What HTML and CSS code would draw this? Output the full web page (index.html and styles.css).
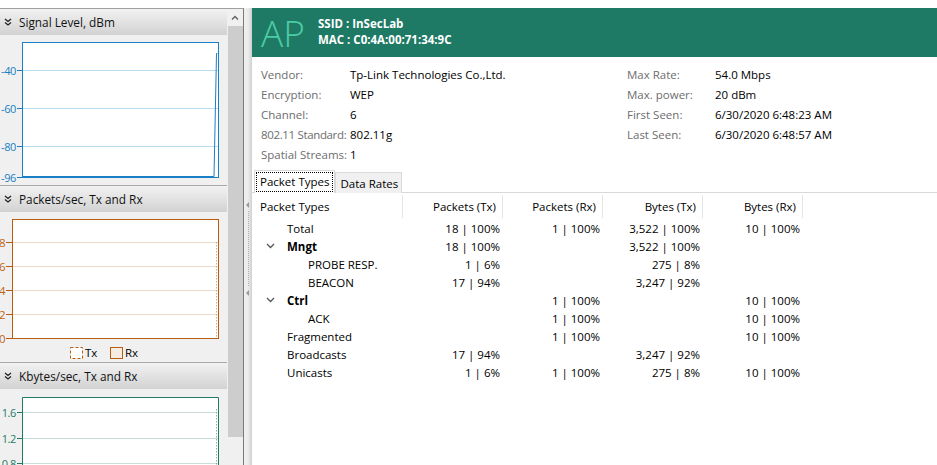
FILE: index.html
```html
<!DOCTYPE html>
<html>
<head>
<meta charset="utf-8">
<link rel="stylesheet" href="styles.css">
</head>
<body>
<div class="topstrip"></div>
<div class="main">
  <aside class="left">
    <div class="left-content">
      <section class="sec">
        <div class="sec-head">
          <svg class="chev" width="8" height="8" viewBox="0 0 8 8"><path d="M1 1 L4 3.5 L7 1 M1 4.5 L4 7 L7 4.5" fill="none" stroke="#222" stroke-width="1.3"/></svg>
          <span>Signal Level, dBm</span>
        </div>
        <div class="chart chart1">
          <svg width="227" height="150" viewBox="0 0 227 150">
            <g stroke="#b9dcef" stroke-width="1">
              <line x1="23" y1="35.5" x2="218" y2="35.5"/>
              <line x1="23" y1="73.5" x2="218" y2="73.5"/>
              <line x1="23" y1="111.5" x2="218" y2="111.5"/>
            </g>
            <rect x="22.5" y="7.5" width="196" height="135" fill="none" stroke="#1a7fc4"/>
            <g stroke="#1a7fc4">
              <line x1="17" y1="35.5" x2="22" y2="35.5"/>
              <line x1="17" y1="73.5" x2="22" y2="73.5"/>
              <line x1="17" y1="111.5" x2="22" y2="111.5"/>
              <line x1="17" y1="142.5" x2="22" y2="142.5"/>
            </g>
            <polyline points="22,141.5 214,141.5 216.5,18.5 217.5,18.5" fill="none" stroke="#1a7fc4"/>
            <g class="lbl blue narrow" text-anchor="end">
              <text x="16" y="39.5">-40</text>
              <text x="16" y="77.5">-60</text>
              <text x="16" y="115.5">-80</text>
              <text x="16" y="146.5">-96</text>
            </g>
          </svg>
        </div>
      </section>
      <section class="sec">
        <div class="sec-head">
          <svg class="chev" width="8" height="8" viewBox="0 0 8 8"><path d="M1 1 L4 3.5 L7 1 M1 4.5 L4 7 L7 4.5" fill="none" stroke="#222" stroke-width="1.3"/></svg>
          <span>Packets/sec, Tx and Rx</span>
        </div>
        <div class="chart chart2">
          <svg width="227" height="150" viewBox="0 0 227 150">
            <g stroke="#ead9c8">
              <line x1="13" y1="30.5" x2="218" y2="30.5"/>
              <line x1="13" y1="54.5" x2="218" y2="54.5"/>
              <line x1="13" y1="78.5" x2="218" y2="78.5"/>
              <line x1="13" y1="102.5" x2="218" y2="102.5"/>
            </g>
            <line x1="216.5" y1="30" x2="216.5" y2="126" stroke="#e3a676" stroke-dasharray="1.5 1.5"/>
            <rect x="12.5" y="7.5" width="206" height="119" fill="none" stroke="#b85c0f"/>
            <g stroke="#b85c0f">
              <line x1="6" y1="30.5" x2="12" y2="30.5"/>
              <line x1="6" y1="54.5" x2="12" y2="54.5"/>
              <line x1="6" y1="78.5" x2="12" y2="78.5"/>
              <line x1="6" y1="102.5" x2="12" y2="102.5"/>
              <line x1="6" y1="126.5" x2="12" y2="126.5"/>
            </g>
            <g class="lbl orange" text-anchor="end">
              <text x="5.5" y="34.5">8</text>
              <text x="5.5" y="58.5">6</text>
              <text x="5.5" y="82.5">4</text>
              <text x="5.5" y="106.5">2</text>
              <text x="5.5" y="130.5">0</text>
            </g>
            <rect x="70.5" y="135.5" width="12" height="11" fill="#fff" stroke="#b85c0f" stroke-dasharray="3 2"/>
            <text class="lbl" x="85" y="145">Tx</text>
            <rect x="110.5" y="135.5" width="12" height="11" fill="#f6ece2" stroke="#b85c0f"/>
            <text class="lbl" x="125" y="145">Rx</text>
          </svg>
        </div>
      </section>
      <section class="sec">
        <div class="sec-head">
          <svg class="chev" width="8" height="8" viewBox="0 0 8 8"><path d="M1 1 L4 3.5 L7 1 M1 4.5 L4 7 L7 4.5" fill="none" stroke="#222" stroke-width="1.3"/></svg>
          <span>Kbytes/sec, Tx and Rx</span>
        </div>
        <div class="chart chart3">
          <svg width="227" height="76" viewBox="0 0 227 76">
            <g stroke="#c9ddd7">
              <line x1="23" y1="23.5" x2="218" y2="23.5"/>
              <line x1="23" y1="49.5" x2="218" y2="49.5"/>
              <line x1="23" y1="74.5" x2="218" y2="74.5"/>
            </g>
            <line x1="216.5" y1="20" x2="216.5" y2="76" stroke="#7fb7a8" stroke-dasharray="1.5 1.5"/>
            <path d="M22.5 80 V8.5 H218.5 V80" fill="none" stroke="#1f7a66"/>
            <g stroke="#1f7a66">
              <line x1="17" y1="23.5" x2="22" y2="23.5"/>
              <line x1="17" y1="49.5" x2="22" y2="49.5"/>
              <line x1="17" y1="74.5" x2="22" y2="74.5"/>
            </g>
            <g class="lbl green narrow" text-anchor="end">
              <text x="16" y="27.5">1.6</text>
              <text x="16" y="53.5">1.2</text>
              <text x="16" y="78.5">0.8</text>
            </g>
          </svg>
        </div>
      </section>
    </div>
    <div class="vscroll">
      <div class="vs-up"><svg width="8" height="5" viewBox="0 0 8 5"><path d="M1 4.5 L4 1.5 L7 4.5" fill="none" stroke="#606060" stroke-width="1.4"/></svg></div>
      <div class="vs-thumb"></div>
    </div>
  </aside>
  <div class="splitter">
    <svg class="grip" width="8" height="100" viewBox="0 0 8 100">
      <path d="M2 4 L5 1 L5 7 Z" fill="#9a9a9a"/>
      <line x1="4.5" y1="10" x2="4.5" y2="86" stroke="#b0b0b0" stroke-dasharray="1 1"/>
      <path d="M2 92 L5 89 L5 95 Z" fill="#9a9a9a"/>
    </svg>
  </div>
  <main class="right">
    <header class="ap-head">
      <div class="ap">AP</div>
      <div class="ap-ids">
        <div>SSID : InSecLab</div>
        <div>MAC : C0:4A:00:71:34:9C</div>
      </div>
    </header>
    <div class="info">
      <dl class="info-col info-left">
        <dt>Vendor:</dt><dd>Tp-Link Technologies Co.,Ltd.</dd>
        <dt>Encryption:</dt><dd>WEP</dd>
        <dt>Channel:</dt><dd>6</dd>
        <dt class="tight">802.11 Standard:</dt><dd>802.11g</dd>
        <dt>Spatial Streams:</dt><dd>1</dd>
      </dl>
      <dl class="info-col info-right">
        <dt>Max Rate:</dt><dd>54.0 Mbps</dd>
        <dt>Max. power:</dt><dd>20 dBm</dd>
        <dt>First Seen:</dt><dd>6/30/2020 6:48:23 AM</dd>
        <dt>Last Seen:</dt><dd>6/30/2020 6:48:57 AM</dd>
      </dl>
    </div>
    <div class="tabs">
      <div class="tab active"><span class="focus">Packet Types</span></div>
      <div class="tab">Data Rates</div>
    </div>
    <div class="grid">
      <div class="hd first">Packet Types</div>
      <div class="hd">Packets (Tx)</div>
      <div class="hd">Packets (Rx)</div>
      <div class="hd">Bytes (Tx)</div>
      <div class="hd">Bytes (Rx)</div>

      <div class="c n l1">Total</div><div class="c">18 | 100%</div><div class="c">1 | 100%</div><div class="c">3,522 | 100%</div><div class="c">10 | 100%</div>
      <div class="c n l1 grp"><svg class="tw" width="9" height="6" viewBox="0 0 9 6"><path d="M1 1 L4.5 4.5 L8 1" fill="none" stroke="#555" stroke-width="1.3"/></svg><b>Mngt</b></div><div class="c">18 | 100%</div><div class="c"></div><div class="c">3,522 | 100%</div><div class="c"></div>
      <div class="c n l2">PROBE RESP.</div><div class="c">1 | 6%</div><div class="c"></div><div class="c">275 | 8%</div><div class="c"></div>
      <div class="c n l2">BEACON</div><div class="c">17 | 94%</div><div class="c"></div><div class="c">3,247 | 92%</div><div class="c"></div>
      <div class="c n l1 grp"><svg class="tw" width="9" height="6" viewBox="0 0 9 6"><path d="M1 1 L4.5 4.5 L8 1" fill="none" stroke="#555" stroke-width="1.3"/></svg><b>Ctrl</b></div><div class="c"></div><div class="c">1 | 100%</div><div class="c"></div><div class="c">10 | 100%</div>
      <div class="c n l2">ACK</div><div class="c"></div><div class="c">1 | 100%</div><div class="c"></div><div class="c">10 | 100%</div>
      <div class="c n l1">Fragmented</div><div class="c"></div><div class="c">1 | 100%</div><div class="c"></div><div class="c">10 | 100%</div>
      <div class="c n l1">Broadcasts</div><div class="c">17 | 94%</div><div class="c"></div><div class="c">3,247 | 92%</div><div class="c"></div>
      <div class="c n l1">Unicasts</div><div class="c">1 | 6%</div><div class="c">1 | 100%</div><div class="c">275 | 8%</div><div class="c">10 | 100%</div>
    </div>
  </main>
</div>
</body>
</html>
```
FILE: styles.css
```css
* { box-sizing: border-box; }
html, body { margin: 0; padding: 0; }
body {
  width: 937px;
  height: 465px;
  overflow: hidden;
  background: #fff;
  font-family: "Open Sans", "Noto Sans", sans-serif;
  font-size: 11.5px;
  color: #000;
}
.topstrip { height: 8px; background: #fff; }
.main { display: flex; height: 457px; }

.left {
  flex: none;
  width: 244px;
  display: flex;
  background: #f0f0f0;
  border-top: 1px solid #a0a0a0;
  border-right: 1px solid #7a7a7a;
  overflow: hidden;
}
.left-content { flex: none; width: 227px; display: flex; flex-direction: column; overflow: hidden; }
.sec { flex: none; border-bottom: 1px solid #a9a9a9; }
.sec-head {
  height: 26px;
  display: flex;
  align-items: center;
  gap: 7px;
  padding-left: 4px;
  background: linear-gradient(#f2f2f2, #d2d2d2);
  font-size: 11.8px;
  color: #111;
}
.chev { flex: none; }
.chart { height: 150px; }
.chart svg { display: block; }
.chart3 { height: 76px; }
.lbl { font-family: "Open Sans", "Noto Sans", sans-serif; font-size: 11.5px; fill: #000; }
.lbl.narrow { font-size: 11px; letter-spacing: -0.4px; }
.lbl.blue { fill: #1a7fc4; }
.lbl.orange { fill: #c0630f; }
.lbl.green { fill: #1f7a66; }

.chart svg { background: linear-gradient(#fff, #fff) no-repeat; }
.chart1 svg { background-position: 23px 8px; background-size: 195px 134px; }
.chart2 svg { background-position: 13px 8px; background-size: 205px 118px; }
.chart3 svg { background-position: 23px 9px; background-size: 195px 70px; }

.vscroll { flex: none; width: 16px; background: #f0f0f0; display: flex; flex-direction: column; align-items: center; }
.vs-up { height: 17px; width: 16px; display: flex; align-items: center; justify-content: center; }
.vs-thumb { width: 15px; height: 411px; background: #cdcdcd; }

.splitter {
  flex: none;
  width: 8px;
  background: linear-gradient(90deg, #f0f0f0 0, #ececec 50%, #d0d0d0 100%);
  display: flex;
  align-items: flex-start;
  padding-top: 193px;
}

.right { flex: 1; min-width: 0; background: #fff; display: flex; flex-direction: column; }
.ap-head {
  height: 49px;
  background: #1e7a64;
  display: flex;
  align-items: center;
  padding-left: 9px;
}
.ap {
  font-family: "Open Sans", sans-serif;
  font-weight: 300;
  font-size: 37px;
  color: #4ccba7;
  width: 57px;
  line-height: 40px;
  margin-top: 1px;
}
.ap-ids { color: #fff; font-weight: 700; font-size: 11.5px; line-height: 16px; margin-top: -2px; }

.info { display: flex; padding: 7px 0 0 9px; height: 113px; }
.info-col {
  margin: 0;
  display: grid;
  grid-template-columns: 89px auto;
  grid-auto-rows: 20px;
  align-items: center;
  align-content: start;
  white-space: nowrap;
}
.info-left { flex: none; width: 366px; }
.info-right { flex: 1; grid-template-columns: 88px auto; justify-content: start; }
.info-col dt { color: #6d6d6d; }
.info-col dt.tight { letter-spacing: -0.35px; }
.info-col dd { margin: 0; }

.tabs {
  display: flex;
  align-items: flex-end;
  padding-left: 2px;
  height: 23px;
  border-bottom: 1px solid #d9d9d9;
}
.tab {
  height: 21px;
  padding: 0 3px 0 4px;
  display: flex;
  align-items: center;
  background: #f0f0f0;
  border: 1px solid #d9d9d9;
  border-bottom: none;
  font-size: 11.5px;
  margin-bottom: -1px;
}
.tab.active {
  height: 23px;
  background: #fff;
  padding: 0 1px;
}
.tab.active .focus { border: 1px dotted #000; padding: 1px 3px; line-height: 16px; }

.grid {
  display: grid;
  grid-template-columns: 151px repeat(4, 100px);
  grid-template-rows: 26px;
  grid-auto-rows: 18px;
  font-size: 11.5px;
}
.hd {
  display: flex;
  align-items: center;
  justify-content: flex-end;
  padding-right: 6px;
  border-right: 1px solid #e5e5e5;
  margin: 2px 0 1px;
}
.hd.first { justify-content: flex-start; padding-left: 8px; }
.c { display: flex; align-items: center; justify-content: flex-end; padding-right: 3px; white-space: nowrap; }
.c.n { justify-content: flex-start; }
.c.l1 { padding-left: 35px; }
.c.l2 { padding-left: 56px; }
.c.grp { padding-left: 14px; }
.tw { margin-right: 12px; flex: none; }
.c b { font-weight: 700; }
```
